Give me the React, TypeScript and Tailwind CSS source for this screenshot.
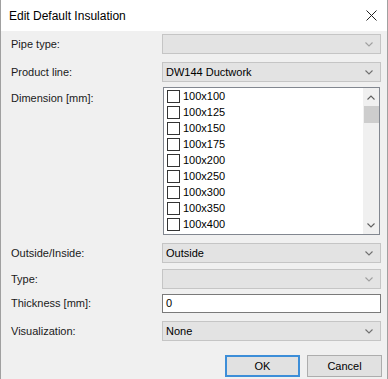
import * as React from "react";

const sizes = ["100x100", "100x125", "100x150", "100x175", "100x200", "100x250", "100x300", "100x350", "100x400"];

function Chevron({ up = false, color = "#606060" }: { up?: boolean; color?: string }) {
  return (
    <svg width="8" height="5" viewBox="0 0 8 5" className="block">
      <path
        d={up ? "M0.5 4.5 L4 1 L7.5 4.5" : "M0.5 0.5 L4 4 L7.5 0.5"}
        fill="none"
        stroke={color}
        strokeWidth="1.1"
      />
    </svg>
  );
}

function Combo({ value, disabled }: { value?: string; disabled?: boolean }) {
  return (
    <div className="flex h-[20px] w-[219px] items-center justify-between border border-[#c5c5c5] bg-[#e3e3e3] pl-[3px] pr-[7px]">
      <span className="text-[11px] text-black">{value}</span>
      <Chevron color={disabled ? "#a0a0a0" : "#707070"} />
    </div>
  );
}

function Row({ label, className, children }: { label: string; className: string; children: React.ReactNode }) {
  return (
    <div className={`flex items-center ${className}`}>
      <div className="w-[151px] text-[11px] text-[#1a1a1a]">{label}</div>
      {children}
    </div>
  );
}

export default function App() {
  return (
    <div
      className="flex h-[379px] w-[388px] flex-col overflow-hidden border-x border-[#a0a0a0] bg-[#f0f0f0]"
      style={{ fontFamily: '"Liberation Sans", Arial, sans-serif' }}
    >
      <div className="flex h-[31px] shrink-0 items-center justify-between bg-white pl-[8px] pr-[10px]">
        <span className="text-[12px] text-black">Edit Default Insulation</span>
        <svg width="11" height="11" viewBox="0 0 11 11">
          <path d="M0.5 0.5 L10.5 10.5 M10.5 0.5 L0.5 10.5" stroke="#222" strokeWidth="1" />
        </svg>
      </div>

      <div className="flex flex-col pl-[10px]">
        <Row label="Pipe type:" className="mt-[3px]">
          <Combo disabled />
        </Row>
        <Row label="Product line:" className="mt-[8px]">
          <Combo value="DW144 Ductwork" />
        </Row>

        <div className="mt-[5px] flex">
          <div className="w-[152px] pt-[3px] text-[11px] text-[#1a1a1a]">Dimension [mm]:</div>
          <div className="flex h-[148px] w-[217px] border border-[#828790] bg-white">
            <div className="flex flex-1 flex-col">
              {sizes.map((s) => (
                <div key={s} className="flex h-[16px] items-center pl-[3px]">
                  <div className="h-[13px] w-[13px] border border-[#333] bg-white" />
                  <span className="ml-[3px] text-[11px] text-black">{s}</span>
                </div>
              ))}
            </div>
            <div className="flex w-[16px] flex-col items-center bg-[#f0f0f0]">
              <div className="flex h-[18px] items-center justify-center">
                <Chevron up color="#606060" />
              </div>
              <div className="h-[17px] w-[15px] bg-[#cdcdcd]" />
              <div className="flex-1" />
              <div className="flex h-[18px] items-center justify-center">
                <Chevron color="#606060" />
              </div>
            </div>
          </div>
        </div>

        <Row label="Outside/Inside:" className="mt-[8px]">
          <Combo value="Outside" />
        </Row>
        <Row label="Type:" className="mt-[6px]">
          <Combo disabled />
        </Row>
        <Row label="Thickness [mm]:" className="mt-[5px]">
          <div className="flex h-[19px] w-[219px] items-center border border-[#7a7a7a] bg-white pl-[3px] text-[11px] text-black">
            0
          </div>
        </Row>
        <Row label="Visualization:" className="mt-[8px]">
          <Combo value="None" />
        </Row>

        <div className="mt-[14px] flex justify-end gap-[7px] pr-[5px]">
          <button className="h-[22px] w-[75px] border-2 border-[#3d8ed8] bg-[#e1e1e1] text-[11px] text-black">
            OK
          </button>
          <button className="h-[22px] w-[75px] border border-[#adadad] bg-[#e1e1e1] text-[11px] text-black">
            Cancel
          </button>
        </div>
      </div>
    </div>
  );
}
